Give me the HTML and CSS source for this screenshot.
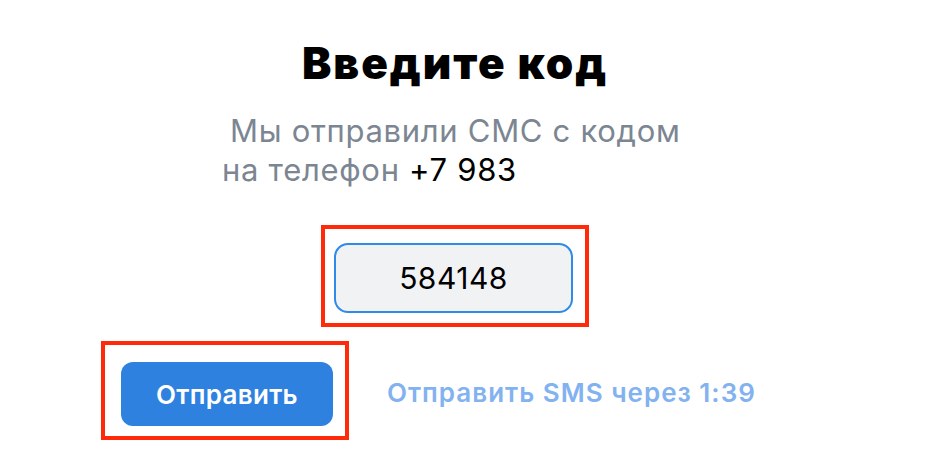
FILE: index.html
```html
<!DOCTYPE html>
<html lang="ru">

<head>
    <meta charset="UTF-8">
    <meta name="viewport" content="width=device-width, initial-scale=1.0">
    <title>Введите код</title>
    <link rel="stylesheet" href="styles.css">
</head>

<body>

    <div class="page">
        <h1 class="title">Введите код</h1>

        <p class="hint">
            <span class="hint-first">Мы отправили СМС с кодом</span><br>
            на телефон <span class="phone">+7 983</span>
        </p>

        <div class="mark mark-code">
            <div class="code">584148</div>
        </div>

        <div class="actions">
            <div class="mark mark-btn">
                <button class="send">Отправить</button>
            </div>
            <span class="resend">Отправить SMS через 1:39</span>
        </div>
    </div>

</body>

</html>
```

FILE: styles.css
```css
body {
    margin: 0;
    background: #fff;
    font-family: Inter, "Noto Sans", "Liberation Sans", sans-serif;
}

.page {
    width: 710px;
    margin-left: 100px;
    padding-top: 37px;
    display: flex;
    flex-direction: column;
    align-items: center;
}

.title {
    margin: 0;
    font-size: 44px;
    line-height: 52px;
    font-weight: 900;
    color: #000;
    letter-spacing: 2px;
}

.hint {
    align-self: flex-start;
    margin: 22px 0 0 122px;
    font-size: 31px;
    line-height: 39px;
    letter-spacing: 0.7px;
    color: #7c8692;
}

.hint-first {
    padding-left: 8px;
}

.phone {
    color: #000;
}

.mark {
    border: 4px solid #ff2a0a;
}

.mark-code {
    margin-top: 36px;
    padding: 14px 12px 10px 9px;
}

.code {
    width: 235px;
    height: 66px;
    border: 2px solid #2f8be8;
    border-radius: 14px;
    background: #f1f2f4;
    font-size: 30px;
    line-height: 66px;
    letter-spacing: 0.5px;
    text-align: center;
    color: #000;
}

.actions {
    align-self: flex-start;
    margin-top: 14px;
    margin-left: 1px;
    display: flex;
    align-items: center;
    gap: 38px;
}

.mark-btn {
    padding: 17px 12px 10px 16px;
}

.send {
    display: block;
    width: 212px;
    height: 64px;
    border: none;
    border-radius: 12px;
    background: #2f81e0;
    color: #fff;
    font-family: inherit;
    font-size: 26px;
    font-weight: 600;
    letter-spacing: 0.3px;
}

.resend {
    margin-top: 4px;
    font-size: 26px;
    font-weight: 600;
    letter-spacing: 1px;
    color: #82b2ef;
}
```
